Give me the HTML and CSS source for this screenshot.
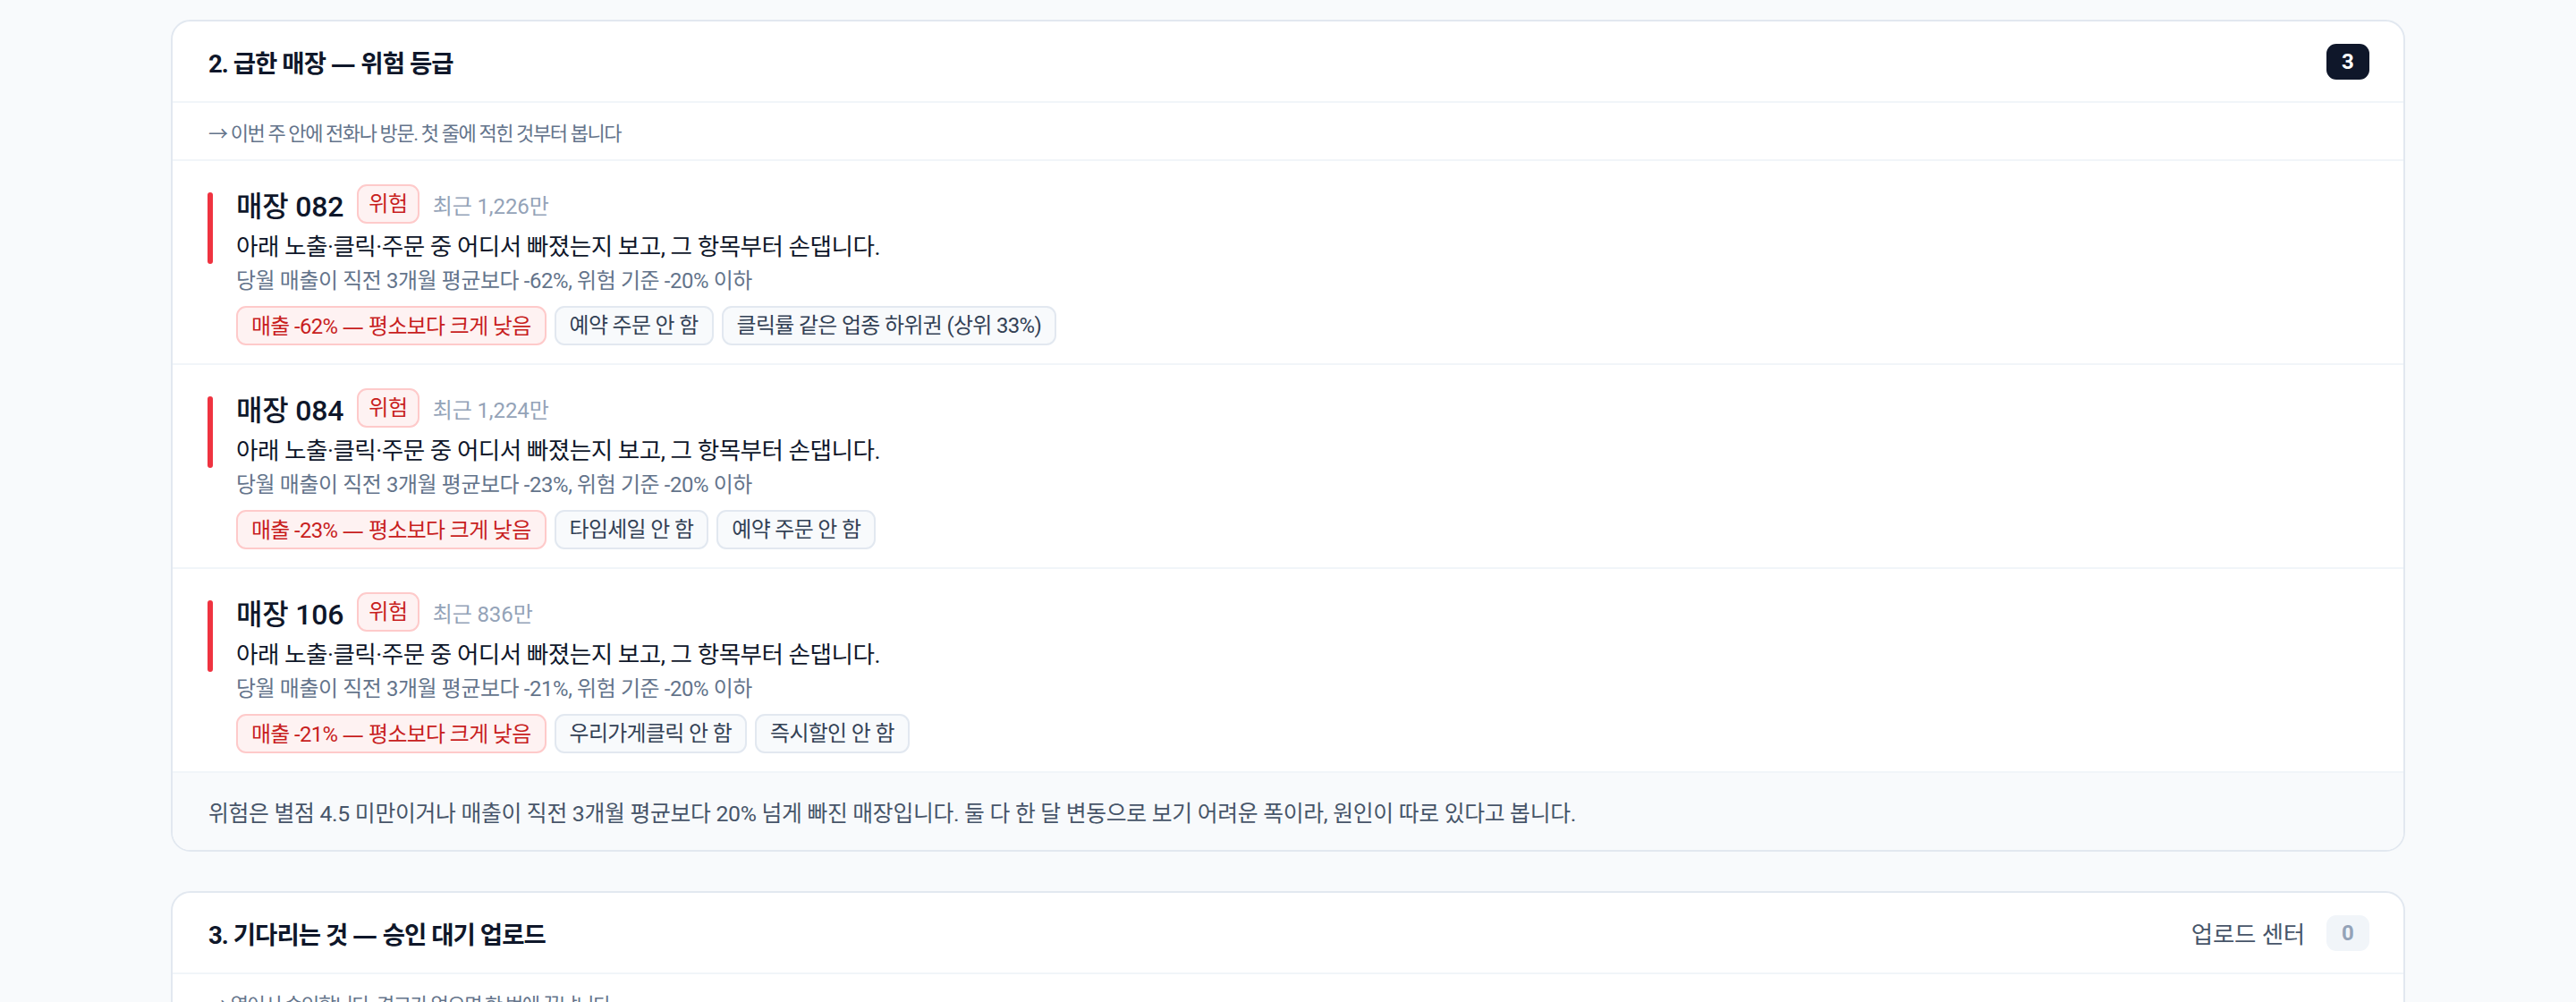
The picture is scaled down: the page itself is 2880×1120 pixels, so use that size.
FILE: index.html
```html
<!DOCTYPE html>
<html lang="ko">
<head>
<meta charset="utf-8">
<title>급한 매장</title>
<link rel="stylesheet" href="styles.css">
</head>
<body>
<main class="page">
  <section class="card">
    <header class="card-head">
      <h2 class="card-title">2. 급한 매장 <span class="dash">—</span> 위험 등급</h2>
      <span class="count count-dark">3</span>
    </header>
    <div class="card-note">→ 이번 주 안에 전화나 방문. 첫 줄에 적힌 것부터 봅니다</div>
    <ul class="stores">
      <li class="store">
        <span class="bar"></span>
        <div class="store-body">
          <div class="store-top">
            <span class="store-name">매장 082</span>
            <span class="tag-risk">위험</span>
            <span class="recent">최근 1,226만</span>
          </div>
          <p class="store-action">아래 노출·클릭·주문 중 어디서 빠졌는지 보고, 그 항목부터 손댑니다.</p>
          <p class="store-reason">당월 매출이 직전 3개월 평균보다 -62%, 위험 기준 -20% 이하</p>
          <div class="chips">
            <span class="chip chip-red">매출 -62% <span class="dash">—</span> 평소보다 크게 낮음</span>
            <span class="chip">예약 주문 안 함</span>
            <span class="chip">클릭률 같은 업종 하위권 (상위 33%)</span>
          </div>
        </div>
      </li>
      <li class="store">
        <span class="bar"></span>
        <div class="store-body">
          <div class="store-top">
            <span class="store-name">매장 084</span>
            <span class="tag-risk">위험</span>
            <span class="recent">최근 1,224만</span>
          </div>
          <p class="store-action">아래 노출·클릭·주문 중 어디서 빠졌는지 보고, 그 항목부터 손댑니다.</p>
          <p class="store-reason">당월 매출이 직전 3개월 평균보다 -23%, 위험 기준 -20% 이하</p>
          <div class="chips">
            <span class="chip chip-red">매출 -23% <span class="dash">—</span> 평소보다 크게 낮음</span>
            <span class="chip">타임세일 안 함</span>
            <span class="chip">예약 주문 안 함</span>
          </div>
        </div>
      </li>
      <li class="store">
        <span class="bar"></span>
        <div class="store-body">
          <div class="store-top">
            <span class="store-name">매장 106</span>
            <span class="tag-risk">위험</span>
            <span class="recent">최근 836만</span>
          </div>
          <p class="store-action">아래 노출·클릭·주문 중 어디서 빠졌는지 보고, 그 항목부터 손댑니다.</p>
          <p class="store-reason">당월 매출이 직전 3개월 평균보다 -21%, 위험 기준 -20% 이하</p>
          <div class="chips">
            <span class="chip chip-red">매출 -21% <span class="dash">—</span> 평소보다 크게 낮음</span>
            <span class="chip">우리가게클릭 안 함</span>
            <span class="chip">즉시할인 안 함</span>
          </div>
        </div>
      </li>
    </ul>
    <footer class="card-foot">위험은 별점 4.5 미만이거나 매출이 직전 3개월 평균보다 20% 넘게 빠진 매장입니다. 둘 다 한 달 변동으로 보기 어려운 폭이라, 원인이 따로 있다고 봅니다.</footer>
  </section>

  <section class="card">
    <header class="card-head">
      <h2 class="card-title">3. 기다리는 것 <span class="dash">—</span> 승인 대기 업로드</h2>
      <div class="head-right">
        <span class="head-link">업로드 센터</span>
        <span class="count count-light">0</span>
      </div>
    </header>
    <div class="card-note">→ 열어서 승인합니다. 경고가 없으면 한 번에 끝납니다</div>
  </section>
</main>
</body>
</html>
```

FILE: styles.css
```css
html {
  background: #f8fafc;
}

body {
  margin: 0;
  font-family: Roboto, "Noto Sans CJK KR", sans-serif;
  color: #0f172a;
}

.page {
  width: 2498px;
  margin: 0 auto;
  padding-top: 22px;
  display: flex;
  flex-direction: column;
  gap: 44px;
}

.card {
  background: #ffffff;
  border: 2px solid #e2e8f0;
  border-radius: 22px;
  overflow: hidden;
}

.dash {
  font-family: "Noto Sans", sans-serif;
  letter-spacing: 0;
}

.card-head {
  height: 89px;
  padding: 0 38px 0 40px;
  display: flex;
  align-items: center;
  justify-content: space-between;
  border-bottom: 2px solid #f1f5f9;
}

.card-title {
  margin: 0;
  font-size: 27.5px;
  font-weight: 700;
  letter-spacing: -0.95px;
  color: #0f172a;
}

.count {
  width: 48px;
  height: 40px;
  border-radius: 11px;
  display: flex;
  align-items: center;
  justify-content: center;
  font-size: 24px;
  font-weight: 700;
}

.count-dark {
  background: #0f172a;
  color: #ffffff;
}

.count-light {
  background: #f1f5f9;
  color: #94a3b8;
}

.head-right {
  display: flex;
  align-items: center;
  gap: 24px;
}

.head-link {
  font-size: 26.5px;
  letter-spacing: -0.2px;
  color: #475569;
}

.card-note {
  height: 63px;
  padding: 0 40px;
  display: flex;
  align-items: center;
  border-bottom: 2px solid #f1f5f9;
  font-size: 22px;
  letter-spacing: -1.4px;
  color: #64748b;
}

.stores {
  list-style: none;
  margin: 0;
  padding: 0;
}

.store {
  height: 228px;
  box-sizing: border-box;
  display: flex;
  gap: 26px;
  padding: 26px 39px 0 39px;
  border-bottom: 2px solid #f1f5f9;
}

.bar {
  flex: none;
  width: 6px;
  height: 80px;
  margin-top: 9px;
  border-radius: 3px;
  background: #ef3340;
}

.store-body {
  display: flex;
  flex-direction: column;
}

.store-top {
  height: 44px;
  display: flex;
  align-items: center;
  gap: 15px;
  margin-bottom: 6px;
}

.store-name {
  font-size: 32px;
  font-weight: 500;
  letter-spacing: -0.2px;
  color: #0f172a;
}

.tag-risk {
  height: 40px;
  line-height: 40px;
  padding: 0 11px;
  border: 2px solid #fecaca;
  border-radius: 11px;
  background: #fef2f2;
  color: #c81e1e;
  font-size: 24px;
  letter-spacing: -0.35px;
}

.recent {
  font-size: 24px;
  letter-spacing: -0.1px;
  color: #94a3b8;
}

.store-action {
  margin: 0;
  line-height: 40px;
  font-size: 26.6px;
  letter-spacing: -0.5px;
  color: #0f172a;
}

.store-reason {
  margin: 0;
  line-height: 36px;
  font-size: 23.9px;
  letter-spacing: -0.37px;
  color: #64748b;
}

.chips {
  margin-top: 10px;
  display: flex;
  gap: 9px;
}

.chip {
  height: 40px;
  line-height: 40px;
  padding: 0 15px;
  border: 2px solid #e2e8f0;
  border-radius: 11px;
  background: #f8fafc;
  color: #334155;
  font-size: 23.9px;
  letter-spacing: -0.62px;
}

.chip-red {
  border-color: #fecaca;
  background: #fef2f2;
  color: #c81e1e;
}

.card-foot {
  height: 86px;
  padding: 0 40px;
  display: flex;
  align-items: center;
  background: #f8fafc;
  font-size: 24.8px;
  letter-spacing: -0.28px;
  color: #475569;
}
```
